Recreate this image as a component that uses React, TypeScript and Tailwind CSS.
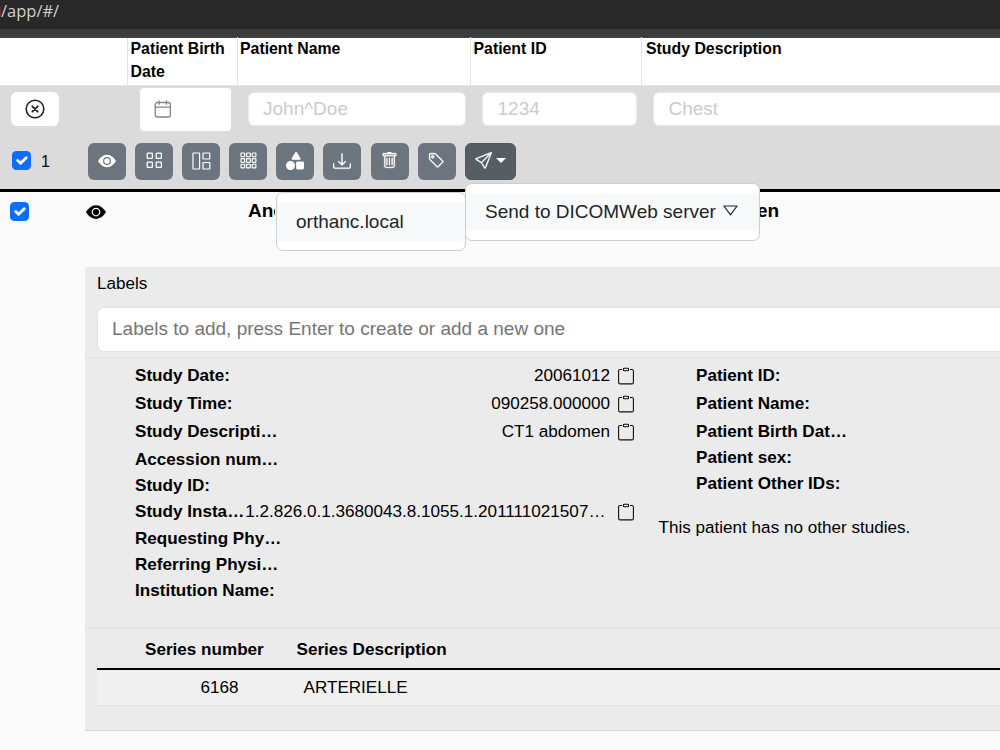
import React from 'react';
import { BsDownload, BsEyeFill, BsSend, BsTag, BsTrash } from 'react-icons/bs';
import { FaShapes } from 'react-icons/fa6';

function Checkbox() {
  return (
    <span className="flex h-[19px] w-[19px] shrink-0 items-center justify-center rounded-[4.5px] bg-[#0d6efd]">
      <svg viewBox="0 0 20 20" className="h-[19px] w-[19px]" fill="none" stroke="#fff" strokeWidth="3" strokeLinecap="round" strokeLinejoin="round">
        <path d="m6 10 3 3 6-6" />
      </svg>
    </span>
  );
}

function ClipboardIcon() {
  return (
    <svg viewBox="0 0 16 18" className="h-[18px] w-[16px] shrink-0" fill="none" stroke="#111" strokeWidth="1.1">
      <path d="M4 2.5H2Q.6 2.5.6 4v11.5q0 1.4 1.4 1.4h12q1.4 0 1.4-1.4V4q0-1.5-1.4-1.5h-2" />
      <rect x="5.5" y="1.2" width="5" height="2.6" rx=".6" />
    </svg>
  );
}

function CalendarIcon() {
  return (
    <svg viewBox="0 0 18 18" className="h-[18px] w-[18px]" fill="none" stroke="#858585" strokeWidth="1.3" strokeLinecap="round">
      <rect x="1.2" y="2.5" width="15.2" height="14.5" rx="2.2" />
      <path d="M1.2 7.2h15.2M5.2.9v3.4M12.4.9v3.4" />
    </svg>
  );
}

function ClearIcon() {
  return (
    <svg viewBox="0 0 20 20" className="h-[20px] w-[20px]" fill="none" stroke="#222" strokeLinecap="round">
      <circle cx="10" cy="10" r="8.8" strokeWidth="1.6" />
      <path d="m7.3 7.3 5.4 5.4m0-5.4-5.4 5.4" strokeWidth="1.8" />
    </svg>
  );
}

function GridIcon() {
  return (
    <svg viewBox="0 0 17 17" className="h-[17px] w-[17px]" fill="none" stroke="#fff" strokeWidth="1.3">
      <rect x="1.2" y="1.2" width="5.2" height="5.2" rx=".6" />
      <rect x="10.2" y="1.2" width="5.2" height="5.2" rx=".6" />
      <rect x="1.2" y="10.2" width="5.2" height="5.2" rx=".6" />
      <rect x="10.2" y="10.2" width="5.2" height="5.2" rx=".6" />
    </svg>
  );
}

function LayoutIcon() {
  return (
    <svg viewBox="0 0 19 18" className="h-[18px] w-[19px]" fill="none" stroke="#fff" strokeWidth="1.2">
      <rect x="1" y="1" width="6.6" height="16" rx=".4" />
      <rect x="11" y="1" width="6.8" height="6" rx=".4" />
      <rect x="11" y="10.5" width="6.8" height="6.5" rx=".4" />
    </svg>
  );
}

function TilesIcon() {
  const cells = [1, 6.6, 12.2];
  return (
    <svg viewBox="0 0 17 17" className="h-[17px] w-[17px]" fill="none" stroke="#fff" strokeWidth="1.15">
      {cells.map((y) => cells.map((x) => <rect key={`${x}-${y}`} x={x} y={y} width="3.7" height="3.7" rx=".6" />))}
    </svg>
  );
}

const tools = [
  { name: 'view', icon: <BsEyeFill className="h-[18px] w-[18px]" /> },
  { name: 'grid', icon: <GridIcon /> },
  { name: 'layout', icon: <LayoutIcon /> },
  { name: 'tiles', icon: <TilesIcon /> },
  { name: 'shapes', icon: <FaShapes className="h-[18px] w-[18px]" /> },
  { name: 'download', icon: <BsDownload className="h-[18px] w-[18px]" strokeWidth="0.3" /> },
  { name: 'delete', icon: <BsTrash className="h-[17px] w-[17px]" strokeWidth="0.3" /> },
  { name: 'tag', icon: <BsTag className="h-[17px] w-[17px]" strokeWidth="0.3" /> },
];

const study = [
  { label: 'Study Date:', value: '20061012', height: 'h-[28px]' },
  { label: 'Study Time:', value: '090258.000000', height: 'h-[28px]' },
  { label: 'Study Descripti…', value: 'CT1 abdomen', height: 'h-[28px]' },
  { label: 'Accession num…', value: '', height: 'h-[27px]' },
  { label: 'Study ID:', value: '', height: 'h-[26px]' },
  { label: 'Study Insta…', value: '1.2.826.0.1.3680043.8.1055.1.201111021507…', height: 'h-[26px]' },
  { label: 'Requesting Phy…', value: '', height: 'h-[27px]' },
  { label: 'Referring Physi…', value: '', height: 'h-[26px]' },
  { label: 'Institution Name:', value: '', height: 'h-[26px]' },
];

const patient = [
  { label: 'Patient ID:', height: 'h-[28px]' },
  { label: 'Patient Name:', height: 'h-[28px]' },
  { label: 'Patient Birth Dat…', height: 'h-[27px]' },
  { label: 'Patient sex:', height: 'h-[26px]' },
  { label: 'Patient Other IDs:', height: 'h-[25px]' },
];

const inputClass = 'flex h-[34px] shrink-0 items-center rounded-[6px] border border-[#e6e8ea] bg-white text-[19px] text-[#cbcbcb]';

export default function App() {
  return (
    <div className="relative flex h-[750px] w-[1000px] flex-col overflow-hidden bg-[#fafafa] font-['Liberation_Sans',Arial,sans-serif] text-[17.1px] text-black">
      <div className="flex h-[29px] shrink-0 bg-[#282828] font-['Open_Sans',sans-serif] text-[16.5px] leading-[21px] text-[#d0d0d0]">
        <span className="mt-[6px] h-[11px] w-px bg-[#6b2b2b]" />
        <span>/app/#/</span>
      </div>
      <div className="h-[9px] shrink-0 border-b border-[#444] bg-[#3c3c3c]" />

      <div className="flex h-[48px] shrink-0 border-b border-[#e4e4e4] bg-white text-[15.85px] font-bold leading-[23px]">
        <div className="w-[128px] shrink-0 border-r border-[#e4e4e4]" />
        <div className="mt-[-1px] w-[110px] shrink-0 whitespace-pre-line border-r border-[#e4e4e4] pl-[2.5px]">{'Patient Birth\nDate'}</div>
        <div className="mt-[-1px] w-[233px] shrink-0 border-r border-[#e4e4e4] pl-[2px]">Patient Name</div>
        <div className="mt-[-1px] w-[171px] shrink-0 border-r border-[#e4e4e4] pl-[2.5px]">Patient ID</div>
        <div className="mt-[-1px] pl-[4px]">Study Description</div>
      </div>

      <div className="h-[103px] shrink-0 bg-[#dbdbdb]">
        <div className="flex h-[46px] items-center pl-[11px]">
          <div className="flex h-[34px] w-[48px] shrink-0 items-center justify-center rounded-[6px] bg-white">
            <ClearIcon />
          </div>
          <div className="ml-[81px] flex h-[43px] w-[91px] shrink-0 items-center rounded-[4px] bg-white pl-[14px]">
            <CalendarIcon />
          </div>
          <div className={inputClass + ' ml-[17px] w-[218px] pl-[14px]'}>John^Doe</div>
          <div className={inputClass + ' ml-[16px] w-[155px] pl-[14.5px]'}>1234</div>
          <div className={inputClass + ' ml-[16px] w-[360px] pl-[14.5px]'}>Chest</div>
        </div>
        <div className="flex h-[57px] items-start pl-[12px] pt-[11px]">
          <div className="mt-[6px] flex items-center">
            <Checkbox />
            <span className="ml-[10px] mt-[3px] w-[47px] text-[16px] leading-[20px]">1</span>
          </div>
          {tools.map((t) => (
            <div key={t.name} className="mr-[9.1px] flex h-[37px] w-[38px] shrink-0 items-center justify-center rounded-[6px] bg-[#6c757d] pb-[2px] text-white">
              {t.icon}
            </div>
          ))}
          <div className="flex h-[37px] w-[51px] shrink-0 items-center justify-center gap-[4px] rounded-[6px] border border-[#51585e] bg-[#565e64] pb-[2px] text-white">
            <BsSend className="h-[17px] w-[17px]" strokeWidth="0.3" />
            <span className="border-x-[5px] border-t-[5px] border-x-transparent border-t-white" />
          </div>
        </div>
      </div>

      <div className="flex h-[78px] shrink-0 items-start border-t-[3px] border-black pl-[10px] pt-[10px]">
        <Checkbox />
        <BsEyeFill className="ml-[57px] h-[20px] w-[20px]" />
        <div className="ml-[142px] mt-[-3px] w-[27px] overflow-hidden whitespace-nowrap text-[19px] font-bold leading-[23px]">Ano</div>
      </div>
      <div className="absolute left-[757px] top-[199px] text-[19px] font-bold leading-[23px]">en</div>

      <div className="ml-[85px] flex h-[464px] shrink-0 flex-col border-b border-[#d8d9dc] bg-[#ebebeb]">
        <div className="flex h-[91px] shrink-0 flex-col border-b border-[#e0e2e7] pl-[12px] pt-[7px]">
          <div className="h-[33px] leading-[20px]">Labels</div>
          <div className="flex h-[45px] shrink-0 items-center rounded-l-[7px] border border-r-0 border-[#e1e4e8] bg-white pl-[14px] text-[19px] text-[#757575]">
            Labels to add, press Enter to create or add a new one
          </div>
        </div>
        <div className="flex h-[270px] shrink-0 border-b border-[#e0e2e7] pt-[4px]">
          <div className="ml-[50px] w-[499px] shrink-0">
            {study.map((r) => (
              <div key={r.label} className={'flex items-center ' + r.height}>
                <span className="shrink-0 whitespace-nowrap font-bold">{r.label}</span>
                {r.value && (
                  <>
                    <span className={r.label === 'Study Insta…' ? 'ml-[1px] mr-auto whitespace-nowrap' : 'ml-auto mr-[8px] whitespace-nowrap'}>{r.value}</span>
                    <ClipboardIcon />
                  </>
                )}
              </div>
            ))}
          </div>
          <div className="ml-[24.5px] flex flex-col">
            <div className="pl-[37.5px]">
              {patient.map((r) => (
                <div key={r.label} className={'flex items-center font-bold ' + r.height}>{r.label}</div>
              ))}
            </div>
            <div className="mt-[21px] leading-[22px]">This patient has no other studies.</div>
          </div>
        </div>
        <div className="ml-[12px] flex h-[42px] shrink-0 items-center border-b-2 border-black pt-[3px] font-bold">
          <span className="w-[151.5px] pl-[48px]"><span className="whitespace-nowrap">Series number</span></span>
          <span className="ml-[48px] whitespace-nowrap">Series Description</span>
        </div>
        <div className="ml-[12px] flex h-[36px] shrink-0 items-center border-b border-[#e0e2e7] bg-[#f0f0f0]">
          <span className="w-[141.5px] text-right">6168</span>
          <span className="ml-[65px]">ARTERIELLE</span>
        </div>
      </div>

      <div className="absolute left-[276px] top-[192px] flex h-[59px] w-[190px] items-center rounded-[7px] border border-[#ccced0] bg-white">
        <div className="flex h-[38px] w-full items-center bg-[#f8f9fa] pl-[19px] pt-px text-[19px] text-[#212529]">orthanc.local</div>
      </div>
      <div className="absolute left-[465px] top-[183px] flex h-[58px] w-[295px] items-center rounded-[7px] border border-[#ccced0] bg-white">
        <div className="flex h-[38px] w-full items-center bg-[#f8f9fa] pl-[19px] text-[19px] text-[#212529]">
          <span className="whitespace-nowrap">Send to DICOMWeb server</span>
          <svg viewBox="0 0 15 11" className="mb-[3px] ml-[7px] h-[11px] w-[15px]" fill="none" stroke="currentColor" strokeWidth="1.2" strokeLinejoin="round">
            <path d="M.9 1h13.2L7.5 9.9Z" />
          </svg>
        </div>
      </div>
    </div>
  );
}
